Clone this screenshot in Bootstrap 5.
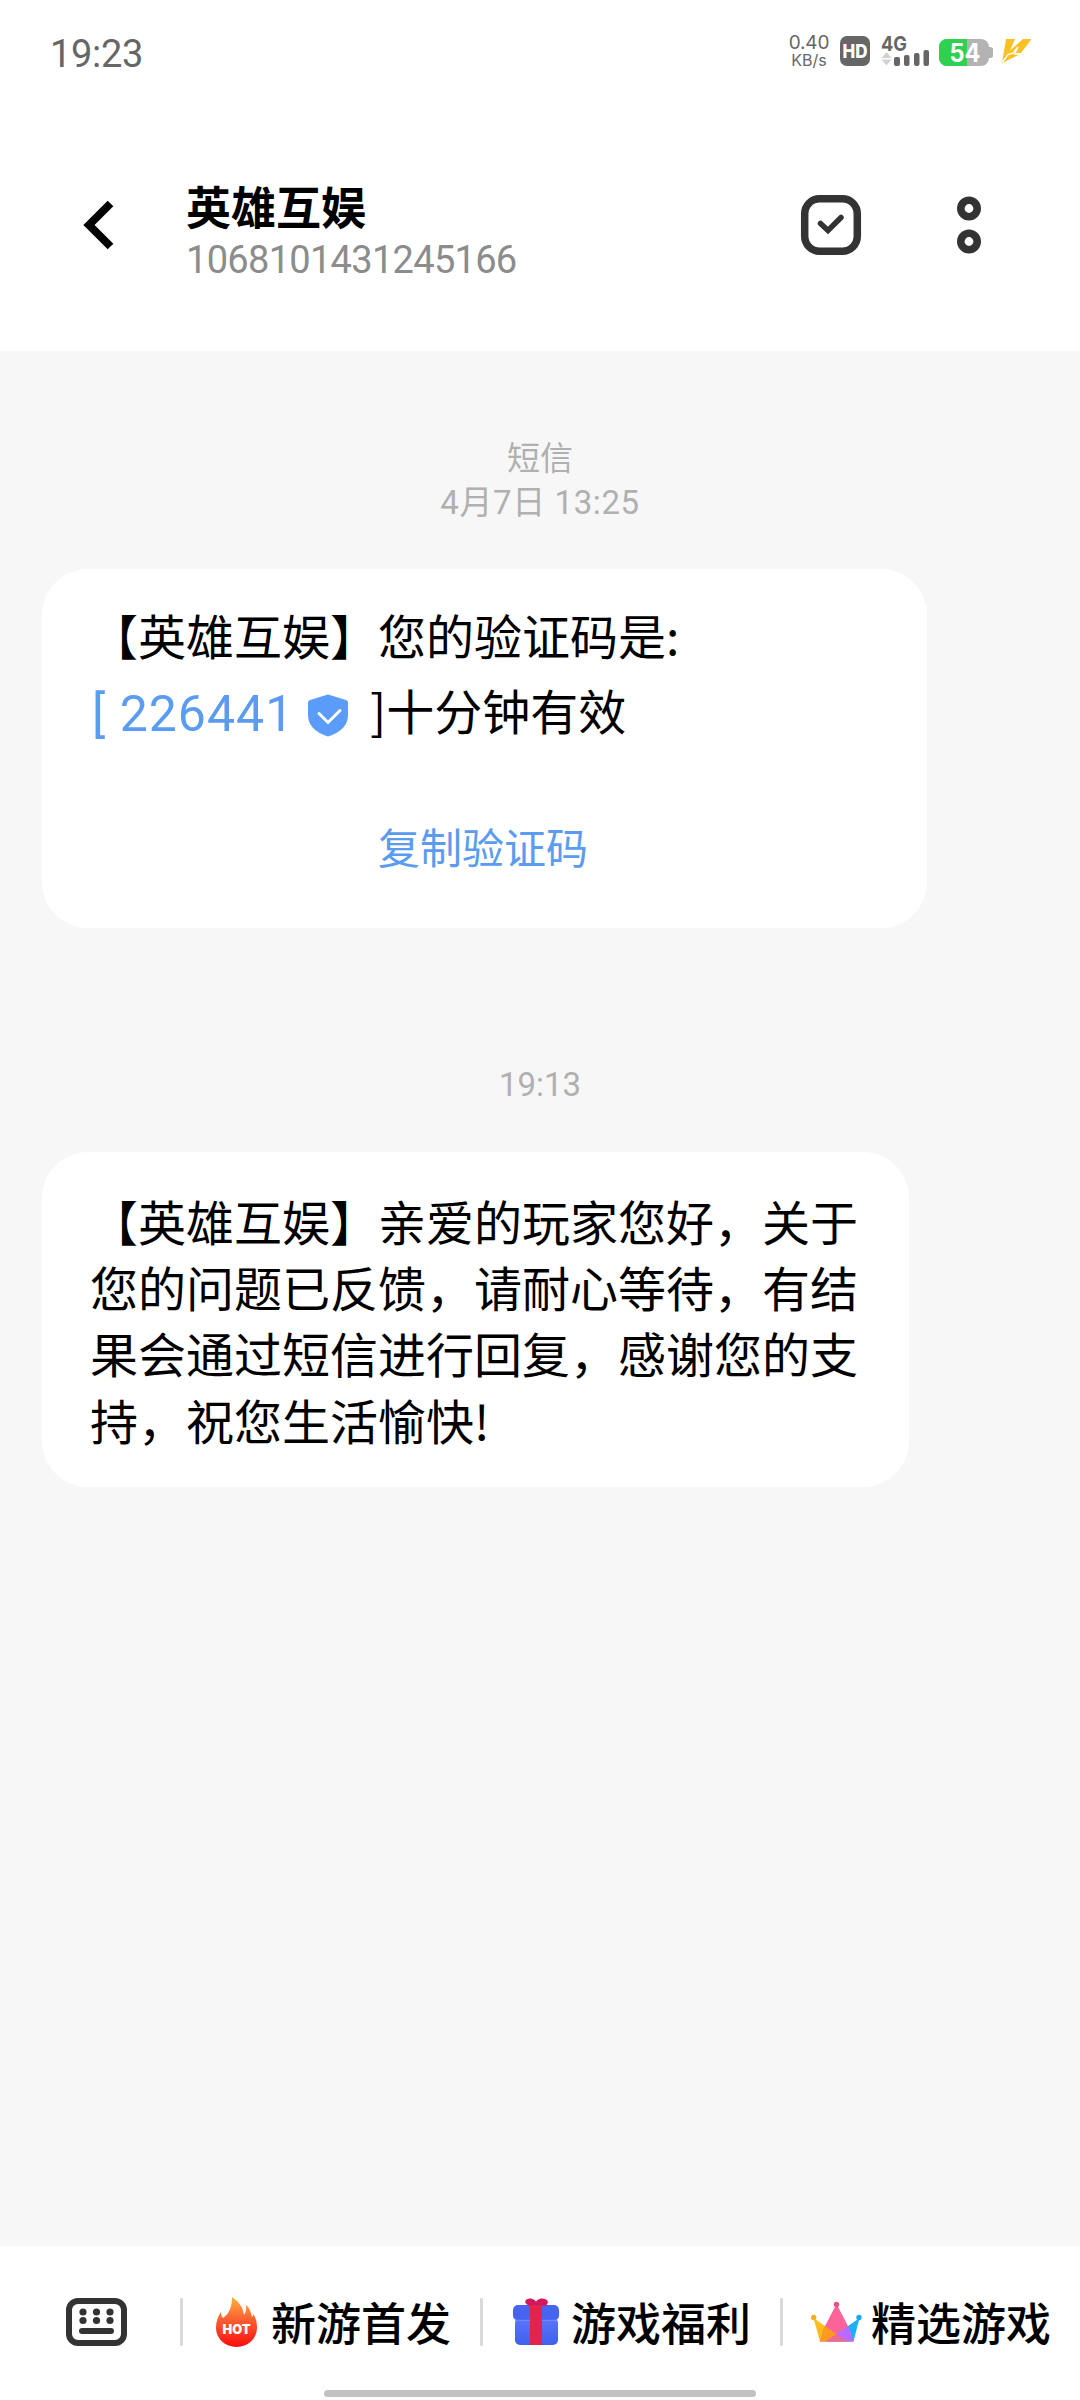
<!DOCTYPE html>
<html lang="zh-CN">
<head>
<meta charset="utf-8">
<meta name="viewport" content="width=device-width, initial-scale=1">
<title>英雄互娱</title>
<link href="https://cdn.jsdelivr.net/npm/bootstrap@5.3.0/dist/css/bootstrap.min.css" rel="stylesheet">
<style>
  body { font-family: "Noto Sans CJK SC", sans-serif; background: #f7f7f7; color: #000; width: 1080px; height: 2400px; overflow: hidden; }
  svg { display: block; flex: none; }
  .clock, .peer-num, .stamp, .code { font-family: Roboto, "Noto Sans CJK SC", sans-serif; }
  .status { height: 100px; padding: 0 49px 0 50px; color: #666; }
  .clock { font-size: 38px; line-height: 54px; margin-top: 27px; letter-spacing: -.3px; }
  .status-icons { margin-top: 32px; height: 40px; }
  .speed { width: 42px; text-align: center; margin-right: 9px; padding-top: 1px; }
  .speed-num { font: 19px/20px "Inter", sans-serif; letter-spacing: -.2px; }
  .speed-unit { font: 16px/15px "Inter", sans-serif; }
  .topbar { height: 251px; padding: 73px 95px 0 74px; }
  .peer { margin-left: 62px; }
  .peer-name { font-size: 45px; line-height: 65px; font-weight: 700; }
  .peer-num { font-size: 38px; line-height: 44px; color: #8c8c8c; letter-spacing: -.7px; }
  .stamp { color: #b0b0b0; font-size: 33px; line-height: 44px; text-align: center; }
  .stamp-first { padding-top: 86px; margin-bottom: 44px; }
  .stamp-later { padding-top: 135px; margin-bottom: 45px; }
  .day { letter-spacing: .6px; }
  .bubble { background: #fff; border-radius: 46px; margin-left: 42px; padding: 0 48px; font-size: 48px; }
  .bubble-code { width: 885px; height: 359px; padding-top: 28px; line-height: 75px; }
  .bubble-text { width: 867px; height: 335px; padding-top: 35px; line-height: 66.2px; }
  .blue { color: #5c9cf0; }
  .code { width: 217px; font-size: 50px; line-height: 66px; letter-spacing: 1px; white-space: pre; padding: 9px 0 0 2px; }
  .shield { margin-top: 12px; }
  .after { margin-left: 21px; white-space: nowrap; }
  .copy { font-size: 42px; line-height: 60px; margin-top: 69px; padding-right: 3px; }
  .bottom { height: 154px; padding-left: 66px; }
  .menu-row { height: 48px; margin-top: 52px; }
  .rule { width: 3px; height: 48px; background: #dadada; border-radius: 1px; }
  .menu-item { width: 297px; font-size: 45px; font-weight: 500; line-height: 48px; padding-left: 28px; }
  .menu-item span { margin-left: 7px; white-space: nowrap; }
  .home { width: 432px; height: 7px; background: #c2c2c2; border-radius: 4px; margin: 44px 0 0 258px; }
</style>
</head>
<body class="d-flex flex-column">
<header class="bg-white">
  <div class="status d-flex justify-content-between align-items-start">
    <div class="clock">19:23</div>
    <div class="status-icons d-flex">
      <div class="speed"><div class="speed-num">0.40</div><div class="speed-unit">KB/s</div></div>
      <svg width="192" height="40" viewBox="839 32 192 40" font-family="Inter, sans-serif">
        <rect x="840" y="36" width="30" height="30" rx="7" fill="#666"/>
        <text x="855" y="58" font-size="19" font-weight="800" fill="#fff" text-anchor="middle" textLength="25" lengthAdjust="spacingAndGlyphs">HD</text>
        <text x="881" y="51" font-size="20" font-weight="700" fill="#666" textLength="26" lengthAdjust="spacingAndGlyphs">4G</text>
        <path d="M886.500 52l5 6h-10zM886.500 65.500l5-6h-10z" fill="#d2d2d2"/>
        <g fill="#666"><rect x="894" y="57" width="6" height="9" rx="2"/><rect x="904" y="55" width="5.500" height="11" rx="2"/><rect x="914" y="53" width="5.500" height="13" rx="2"/><rect x="923.500" y="50" width="5.500" height="16" rx="2"/></g>
        <path d="M947 39h34a8 8 0 0 1 8 8h1.500q2.500 0 2.500 2.500v6q0 2.500-2.500 2.500h-1.500a8 8 0 0 1-8 8h-34a8 8 0 0 1-8-8v-11a8 8 0 0 1 8-8z" fill="#b3b3b3"/>
        <path d="M967 39h-20a8 8 0 0 0-8 8v11a8 8 0 0 0 8 8h20z" fill="#2fd150"/>
        <text x="965" y="62" font-size="25" font-weight="700" fill="#fff" text-anchor="middle" textLength="31" lengthAdjust="spacingAndGlyphs">54</text>
        <path d="M1006 39h9l-5 11.500 13-11.500h8.500l-10.500 14h-5.500l4 1.500-17.500 8.500z" fill="#fbc023"/>
        <path d="M1002.500 62l5.500-7.500 4.500-1 5.500-6.500-3.500 7h4.500" fill="none" stroke="#fff" stroke-width="1.300"/>
      </svg>
    </div>
  </div>
  <div class="topbar d-flex align-items-start">
    <svg class="mt-4" width="50" height="56" viewBox="74 197 50 56"><path d="M110.500 203.500L89 225l21.500 21.500" fill="none" stroke="#000" stroke-width="8"/></svg>
    <div class="peer">
      <div class="peer-name">英雄互娱</div>
      <div class="peer-num">1068101431245166</div>
    </div>
    <svg class="ms-auto" width="184" height="80" viewBox="801 173 184 80" overflow="visible">
      <rect x="804.700" y="198.700" width="52.600" height="52.600" rx="15" fill="none" stroke="#333" stroke-width="7.500"/>
      <path d="M820.500 223.500l7.500 7 13-13" fill="none" stroke="#333" stroke-width="5.500" stroke-linecap="round"/>
      <g fill="none" stroke="#333" stroke-width="7.600"><circle cx="969" cy="208.500" r="8.200"/><circle cx="969" cy="241.500" r="8.200"/></g>
    </svg>
  </div>
</header>

<main class="flex-grow-1">
  <div class="stamp stamp-first">短信<br><span class="day">4月7日 13:25</span></div>
  <div class="bubble bubble-code">
    <div>【英雄互娱】您的验证码是:</div>
    <div class="d-flex align-items-center"><span class="blue code">[ 226441</span>
      <svg class="shield" width="42" height="43" viewBox="0 0 42 43"><path d="M21 .5L39 6q2 .7 2 3v12q0 15-20 21.500Q1 36 1 21V9q0-2.300 2-3z" fill="#5a9cf8"/><path d="M12 19.500l9 9 12-12" fill="none" stroke="#fff" stroke-width="3" stroke-linecap="round"/></svg>
      <span class="after">]十分钟有效</span></div>
    <div class="copy blue text-center">复制验证码</div>
  </div>
  <div class="stamp stamp-later">19:13</div>
  <div class="bubble bubble-text">【英雄互娱】亲爱的玩家您好，关于您的问题已反馈，请耐心等待，有结果会通过短信进行回复，感谢您的支持，祝您生活愉快!</div>
</main>

<footer class="bottom bg-white">
  <div class="menu-row d-flex align-items-center">
    <svg width="114" height="48" viewBox="66 2298 114 48">
      <rect x="69" y="2301" width="55" height="42" rx="9" fill="none" stroke="#333" stroke-width="6"/>
      <g fill="#333"><circle cx="83" cy="2312" r="3.600"/><circle cx="96.500" cy="2312" r="3.600"/><circle cx="110" cy="2312" r="3.600"/><circle cx="83" cy="2320.500" r="3.600"/><circle cx="96.500" cy="2320.500" r="3.600"/><circle cx="110" cy="2320.500" r="3.600"/><rect x="79" y="2328" width="35" height="6" rx="3"/></g>
    </svg>
    <div class="rule"></div>
    <div class="menu-item d-flex align-items-center">
      <svg width="53" height="52" viewBox="211 2295 53 52">
        <defs><linearGradient id="fire" x1="0" y1="0" x2="0" y2="1"><stop offset="0" stop-color="#ffb13a"/><stop offset=".45" stop-color="#fb6033"/><stop offset="1" stop-color="#fb0d0d"/></linearGradient></defs>
        <path d="M232 2296c7 5 11 10 12 18q3-4 2-10c4 3 5 8 6 12q1.500-1 1.500-3c2.500 5 3.500 8 3.500 14a20.500 19 0 0 1-41 0c0-6 1.500-11 5-16q0 4 2 6c7-5 9-12 9-21z" fill="url(#fire)"/>
        <text x="236.500" y="2333" font-family="Inter, sans-serif" font-size="12.500" font-weight="900" fill="#fff" text-anchor="middle" textLength="28" lengthAdjust="spacingAndGlyphs">HOT</text>
      </svg>
      <span>新游首发</span>
    </div>
    <div class="rule"></div>
    <div class="menu-item d-flex align-items-center">
      <svg width="53" height="52" viewBox="511 2295 53 52">
        <defs><linearGradient id="box" x1="0" y1="0" x2="0" y2="1"><stop offset="0" stop-color="#5d74fb"/><stop offset="1" stop-color="#3f60ee"/></linearGradient></defs>
        <rect x="515" y="2317" width="43" height="27" rx="5" fill="url(#box)"/>
        <rect x="513" y="2304" width="46" height="15.500" rx="5" fill="#4664f0"/>
        <path d="M515 2319.300h42" stroke="#7890ff" stroke-width="1"/>
        <path d="M530 2304c-7-3-3-6 1-5.500q3 .5 5 3.500 2-3 5-3.500c5-.5 8 2.500 4 5.500z" fill="#d5175d" stroke="#d5175d" stroke-width="2"/>
        <rect x="530" y="2304" width="12" height="40" fill="#e2244d"/>
      </svg>
      <span>游戏福利</span>
    </div>
    <div class="rule"></div>
    <div class="menu-item d-flex align-items-center">
      <svg width="53" height="52" viewBox="811 2295 53 52">
        <defs><clipPath id="peak"><path d="M836.500 2303l12.500 24 4.500 13.500h-33.500l4-13.500z"/></clipPath></defs>
        <path d="M813.500 2317l33.500 23.500h-27z" fill="#fdbd1c"/>
        <path d="M859.500 2317l-33.500 23.500h27.500z" fill="#1cb0f6"/>
        <path d="M836.500 2303l12.500 24 4.500 13.500h-33.500l4-13.500z" fill="#fb6399"/>
        <g clip-path="url(#peak)"><path d="M813.500 2317l33.500 23.500h-27z" fill="#ff9a1f"/><path d="M859.500 2317l-33.500 23.500h27.500z" fill="#b76bff"/><path d="M836.500 2333l11 7.500h-22z" fill="#ee6a90"/></g>
        <circle cx="836.500" cy="2303.500" r="2.700" fill="#ee4f8c"/><circle cx="813.700" cy="2316.500" r="2.700" fill="#f7ac22"/><circle cx="859" cy="2316.500" r="2.700" fill="#1ca8ee"/>
      </svg>
      <span>精选游戏</span>
    </div>
  </div>
  <div class="home"></div>
</footer>
<script src="https://cdn.jsdelivr.net/npm/bootstrap@5.3.0/dist/js/bootstrap.bundle.min.js"></script>
</body>
</html>
